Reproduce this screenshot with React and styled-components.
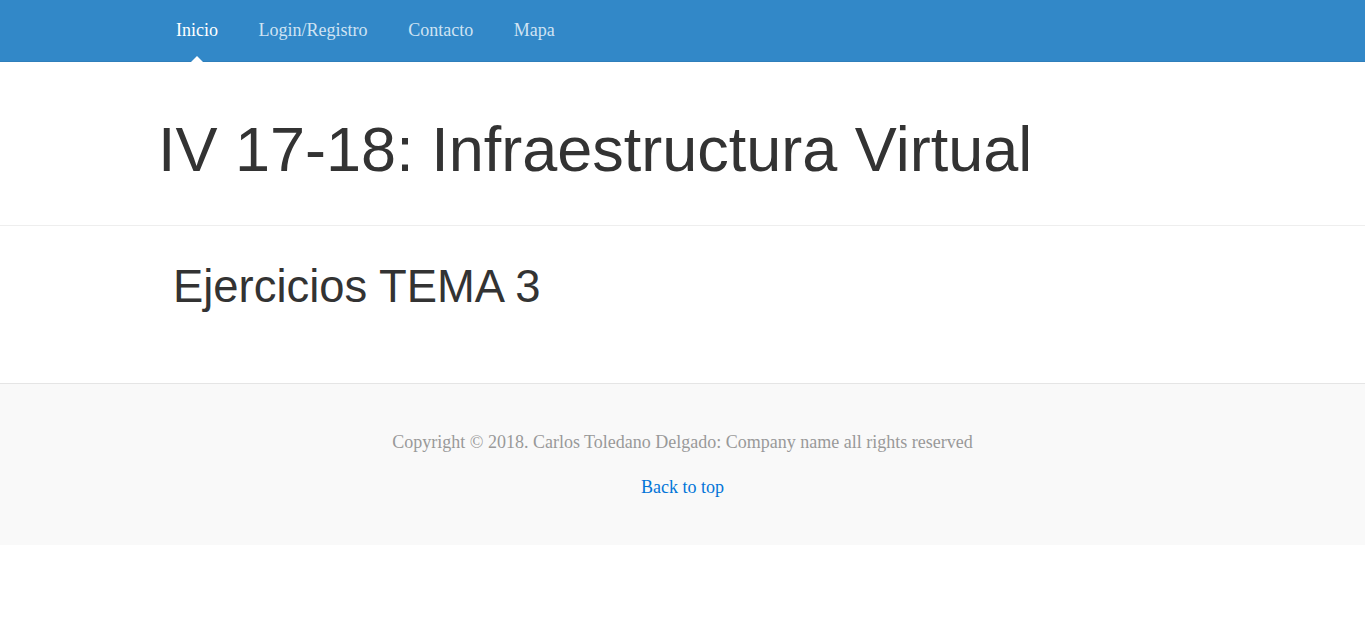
import React from "react";
import styled, { createGlobalStyle } from "styled-components";

const Global = createGlobalStyle`
  html, body { margin: 0; padding: 0; background: #fff; }
  body { font-family: "Liberation Serif", "Times New Roman", serif; }
`;

const NavBar = styled.nav`
  background: #3288c8;
  height: 62px;
  border-bottom: 1px solid #2f7fbb;
  box-sizing: border-box;
`;

const NavList = styled.ul`
  display: flex;
  list-style: none;
  margin: 0;
  padding: 0 0 0 155.7px;
  height: 100%;
`;

const NavItem = styled.li`
  position: relative;
  display: flex;
`;

const NavLink = styled.a`
  display: block;
  padding: 0 20.3px;
  line-height: 60px;
  font-size: 18px;
  color: ${(p) => (p.$active ? "#ffffff" : "#cfe3f3")};
  text-decoration: none;
  cursor: pointer;
`;

const Caret = styled.span`
  position: absolute;
  left: 50%;
  bottom: -1px;
  margin-left: -6px;
  width: 0;
  height: 0;
  border-left: 6px solid transparent;
  border-right: 6px solid transparent;
  border-bottom: 6px solid #fff;
`;

const Header = styled.header`
  padding: 53px 0 41px 158px;
  border-bottom: 1px solid #eeeeee;
`;

const Title = styled.h1`
  margin: 0;
  font-family: "Liberation Sans", Arial, sans-serif;
  font-weight: 400;
  font-size: 63px;
  line-height: 1.1;
  color: #333333;
`;

const Main = styled.main`
  padding: 36px 0 70.5px 173px;
`;

const Subtitle = styled.h2`
  margin: 0;
  font-family: "Liberation Sans", Arial, sans-serif;
  font-weight: 400;
  font-size: 45.4px;
  line-height: 1.1;
  color: #333333;
`;

const Footer = styled.footer`
  background: #f9f9f9;
  border-top: 1px solid #e5e5e5;
  padding: 45px 0 44px;
  display: flex;
  flex-direction: column;
  align-items: center;
  gap: 18px;
`;

const FootText = styled.p`
  margin: 0;
  font-size: 18px;
  line-height: 27px;
  color: #999999;
`;

const TopLink = styled.a`
  font-size: 18px;
  line-height: 27px;
  color: #0275d8;
  text-decoration: none;
  cursor: pointer;
`;

const items = ["Inicio", "Login/Registro", "Contacto", "Mapa"];

export default function App() {
  return (
    <>
      <Global />
      <NavBar>
        <NavList>
          {items.map((t, i) => (
            <NavItem key={t}>
              <NavLink $active={i === 0}>{t}</NavLink>
              {i === 0 && <Caret />}
            </NavItem>
          ))}
        </NavList>
      </NavBar>
      <Header>
        <Title>IV 17-18: Infraestructura Virtual</Title>
      </Header>
      <Main>
        <Subtitle>Ejercicios TEMA 3</Subtitle>
      </Main>
      <Footer>
        <FootText>Copyright © 2018. Carlos Toledano Delgado: Company name all rights reserved</FootText>
        <TopLink>Back to top</TopLink>
      </Footer>
    </>
  );
}
